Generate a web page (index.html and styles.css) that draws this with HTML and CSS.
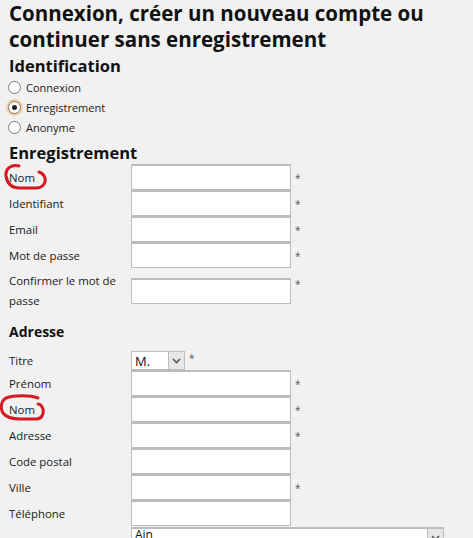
FILE: index.html
```html
<!DOCTYPE html>
<html lang="fr">
<head>
    <meta charset="UTF-8">
    <title>Connexion</title>
    <link rel="stylesheet" href="styles.css">
</head>
<body>
    <h1>Connexion, créer un nouveau compte ou continuer sans enregistrement</h1>

    <h2 class="ident">Identification</h2>
    <div class="choices">
        <label class="choice"><span class="radio"></span>Connexion</label>
        <label class="choice"><span class="radio on"></span>Enregistrement</label>
        <label class="choice"><span class="radio"></span>Anonyme</label>
    </div>

    <h2 class="reg">Enregistrement</h2>
    <div class="form">
        <div class="row">
            <span class="lbl">Nom</span>
            <span class="box"></span><span class="req">*</span>
            <svg class="mark m1" width="50" height="30" viewBox="0 0 50 30"><path d="M19 3 C11 1 5 6 6 13 C7 20 11 25 20 25 L36 25 C43 25 46 20 45 15 C44 12 42 10 39 9" fill="none" stroke="#d41a22" stroke-width="3" stroke-linecap="round"/></svg>
        </div>
        <div class="row"><span class="lbl">Identifiant</span><span class="box"></span><span class="req">*</span></div>
        <div class="row"><span class="lbl">Email</span><span class="box"></span><span class="req">*</span></div>
        <div class="row"><span class="lbl">Mot de passe</span><span class="box"></span><span class="req">*</span></div>
        <div class="row tall"><span class="lbl">Confirmer le mot de passe</span><span class="box"></span><span class="req">*</span></div>
    </div>

    <h3>Adresse</h3>
    <div class="form">
        <div class="row short">
            <span class="lbl">Titre</span>
            <span class="sel">M.<span class="arrow"><svg width="9" height="6" viewBox="0 0 9 6"><path d="M1 1 L4.5 4.5 L8 1" fill="none" stroke="#555" stroke-width="1.6"/></svg></span></span>
            <span class="req small">*</span>
        </div>
        <div class="row"><span class="lbl">Prénom</span><span class="box"></span><span class="req">*</span></div>
        <div class="row">
            <span class="lbl">Nom</span>
            <span class="box"></span><span class="req">*</span>
            <svg class="mark m2" width="50" height="30" viewBox="0 0 50 30"><path d="M38 4 C30 1 14 1 6 4 C1 7 0 14 3 19 C6 23 12 25 20 25 L36 25 C42 25 44 20 43 15 C42 12 40 10 38 10" fill="none" stroke="#d41a22" stroke-width="3" stroke-linecap="round"/></svg>
        </div>
        <div class="row"><span class="lbl">Adresse</span><span class="box"></span><span class="req">*</span></div>
        <div class="row"><span class="lbl">Code postal</span><span class="box"></span><span class="req"></span></div>
        <div class="row"><span class="lbl">Ville</span><span class="box"></span><span class="req">*</span></div>
        <div class="row"><span class="lbl">Téléphone</span><span class="box"></span><span class="req"></span></div>
        <div class="row wide">
            <span class="lbl"></span>
            <span class="sel long">Ain<span class="arrow"><svg width="9" height="6" viewBox="0 0 9 6"><path d="M1 1 L4.5 4.5 L8 1" fill="none" stroke="#555" stroke-width="1.6"/></svg></span></span>
        </div>
    </div>
</body>
</html>
```

FILE: styles.css
```css
body {
    margin: 0;
    padding: 0 9px;
    background: #f0f1f0;
    font-family: "Open Sans", "Noto Sans", sans-serif;
    font-size: 11px;
    color: #1a1a1a;
    overflow: hidden;
}
h1 {
    margin: 0;
    font-size: 20.5px;
    line-height: 26px;
    font-weight: bold;
    color: #111;
}
h2 {
    margin: 0;
    font-size: 16.5px;
    line-height: 22px;
    font-weight: bold;
    color: #111;
}
.ident {
    margin-top: 3px;
}
.reg {
    margin-top: 5px;
}
h3 {
    margin: 9px 0 8px;
    font-size: 14px;
    line-height: 22px;
    font-weight: bold;
    color: #111;
}
.choices {
    margin-left: -1px;
}
.choice {
    display: flex;
    align-items: center;
    height: 20px;
    gap: 5px;
}
.radio {
    width: 13px;
    height: 13px;
    box-sizing: border-box;
    border: 1px solid #7a7a7a;
    border-radius: 50%;
    background: #fff;
    position: relative;
}
.radio.on {
    box-shadow: 0 0 0 2px #f3d29b;
}
.radio.on::after {
    content: "";
    position: absolute;
    left: 3px;
    top: 3px;
    width: 5px;
    height: 5px;
    border-radius: 50%;
    background: #222;
}
.form {
    display: flex;
    flex-direction: column;
}
.row {
    display: grid;
    grid-template-columns: 122px 160px auto;
    align-items: center;
    height: 26px;
    position: relative;
    font-size: 11.4px;
}
.row.tall {
    height: 42px;
    margin-top: 2px;
}
.row.tall .lbl {
    line-height: 20px;
    padding-right: 4px;
}
.row.short {
    height: 19px;
}
.box {
    height: 26px;
    box-sizing: border-box;
    border: 1px solid #bcbcbc;
    border-top-width: 2px;
    background: #fff;
}
.req {
    padding-left: 4px;
    color: #555;
    font-size: 10px;
    align-self: start;
    padding-top: 7px;
}
.req.small {
    padding-top: 0;
    margin-left: -106px;
}
.sel {
    display: flex;
    justify-content: space-between;
    align-items: center;
    width: 54px;
    height: 19px;
    box-sizing: border-box;
    border: 1px solid #bcbcbc;
    background: #fff;
    padding-left: 3px;
    font-size: 13px;
    color: #111;
}
.sel.long {
    width: 313px;
    height: 20px;
    border-width: 2px 1px 1px 1px;
    font-size: 12px;
    line-height: 12px;
    align-items: start;
}
.row.wide {
    height: 12px;
    align-items: start;
    margin-top: 1px;
}
.arrow {
    width: 16px;
    height: 17px;
    box-sizing: border-box;
    border-left: 1px solid #bcbcbc;
    background: #e7e7e7;
    display: flex;
    align-items: center;
    justify-content: center;
}
.mark {
    position: absolute;
    left: -9px;
    top: -1px;
    pointer-events: none;
}
.m2 {
    top: -2px;
}
```
